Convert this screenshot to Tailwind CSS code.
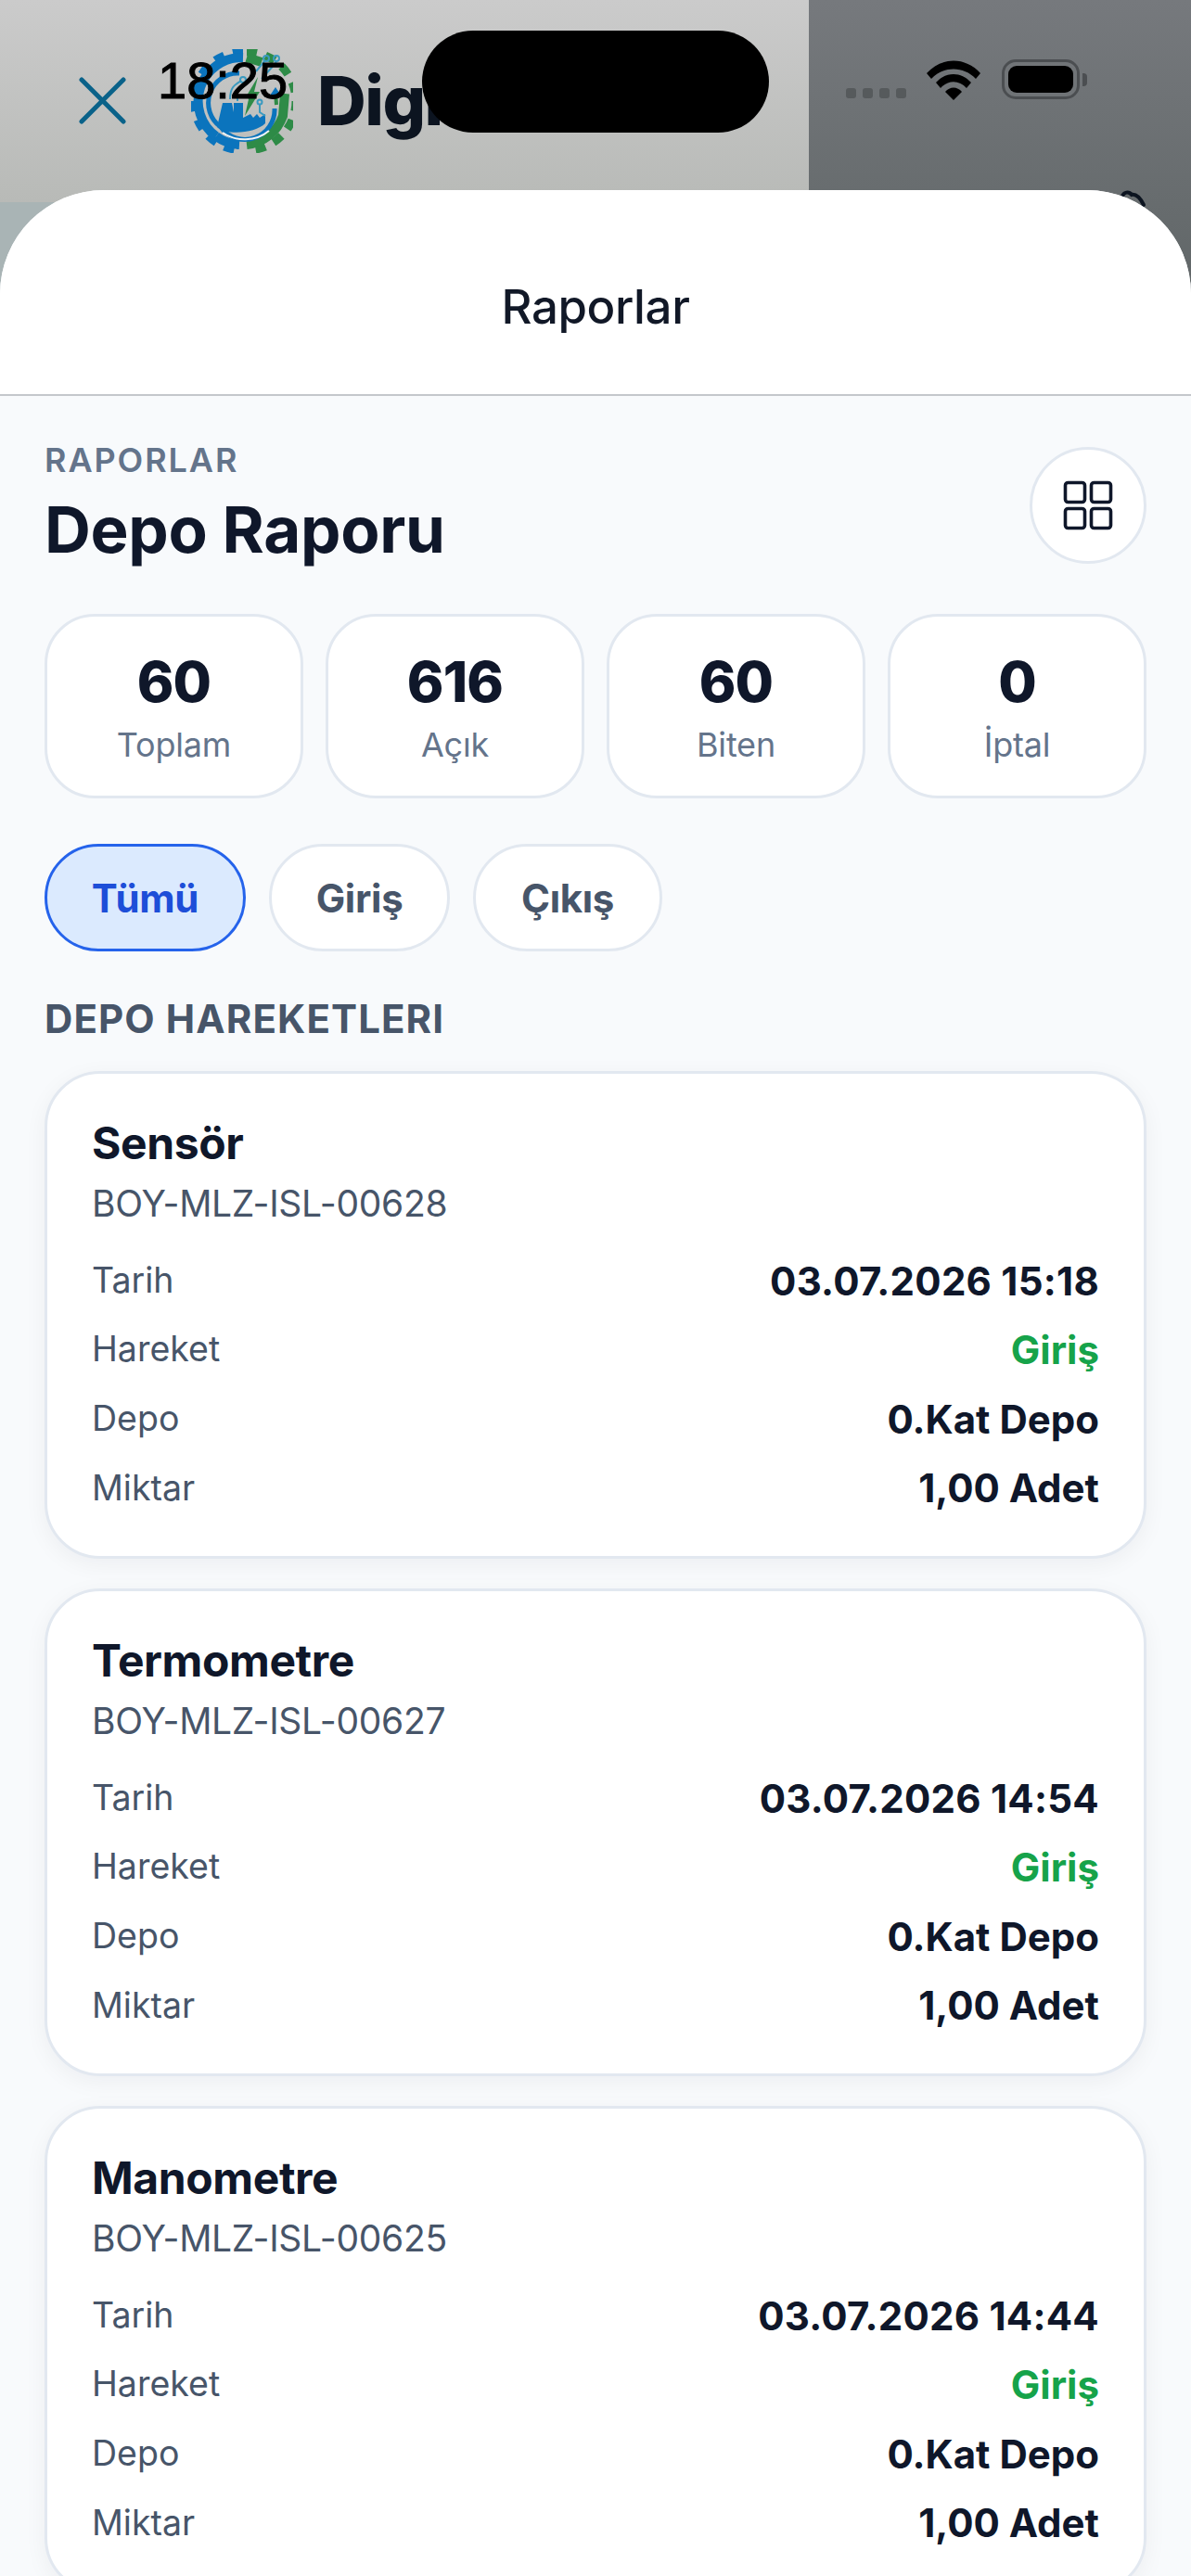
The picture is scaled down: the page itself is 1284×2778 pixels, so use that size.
<!DOCTYPE html>
<html lang="tr">
<head>
<meta charset="utf-8">
<title>Depo Raporu</title>
<script src="https://cdn.jsdelivr.net/npm/@tailwindcss/browser@4"></script>
</head>
<body class="m-0 bg-[#f8fafc]">
<div class="relative w-[1284px] h-[2778px] overflow-hidden font-['Inter',sans-serif] bg-[#f8fafc]">

  <!-- page behind the sheet -->
  <div class="absolute left-0 top-0 w-[1284px] h-[340px] flex">
    <div class="w-[872px] flex flex-col">
      <div class="h-[218px] bg-gradient-to-b from-[#cbcbcb] to-[#b8bab7]"></div>
      <div class="flex-1 bg-[#a9b4b5]"></div>
    </div>
    <div class="flex-1 bg-gradient-to-b from-[#76797d] to-[#5f6566]"></div>
  </div>
  <svg class="absolute left-[85px] top-[83px]" width="51" height="51" viewBox="0 0 51 51" fill="none"><path d="M3 3L48 48M48 3L3 48" stroke="#0a6289" stroke-width="5" stroke-linecap="round"/></svg>

  <!-- logo -->
  <svg class="absolute left-[206px] top-[53px]" width="110" height="112" viewBox="0 0 110 112" fill="none">
    <path d="M56 3A53 53 0 0 0 56 109" stroke="#0b74bd" stroke-width="9" stroke-dasharray="11 9.8"/>
    <path d="M56 9A47 47 0 0 0 27 94" stroke="#0b74bd" stroke-width="10"/>
    <path d="M27 94A47 47 0 0 0 52 103" stroke="#0b74bd" stroke-width="10"/>
    <path d="M60 3A53 53 0 0 1 60 109" stroke="#2e8b47" stroke-width="9" stroke-dasharray="11 9.8"/>
    <path d="M60 103A47 47 0 0 0 99 72L101 48" stroke="#2e8b47" stroke-width="10"/>
    <path d="M60 9L76 14" stroke="#2e8b47" stroke-width="10"/>
    <path d="M52 26A32 32 0 0 0 32 84A32 32 0 0 0 90 64" stroke="#0b74bd" stroke-width="5"/>
    <path d="M92 60L91 46" stroke="#2e8b47" stroke-width="4"/>
    <path d="M85 50L91 41L97 50Z" fill="#0b74bd"/>
    <path d="M28 84L34 58H44L46 68V58H56V74L64 70L67 74L71 70L74 74L80 70V80C70 90 40 94 28 84Z" fill="#0b74bd"/>
    <path d="M34 90C48 100 70 100 84 88" stroke="#f2f5f5" stroke-width="2"/>
    <path d="M60 50L72 30L68 46H74L58 72L62 54Z" fill="#2e8b47"/>
    <path d="M42 54C42 40 48 38 54 34M50 56V46L58 36M70 24L80 12M76 32L92 14" stroke="#3a9ac0" stroke-width="2"/>
    <circle cx="81" cy="10" r="3" stroke="#3a9ac0" stroke-width="2"/><circle cx="92" cy="10" r="3" stroke="#3a9ac0" stroke-width="2"/><circle cx="56" cy="33" r="3" stroke="#3a9ac0" stroke-width="2"/>
    <path d="M74 60V68L80 72" stroke="#3a9ac0" stroke-width="2"/>
    <circle cx="74" cy="57" r="2.5" stroke="#3a9ac0" stroke-width="2"/>
  </svg>
  <div class="absolute left-[342px] top-[65px] text-[73px] leading-[88px] font-extrabold text-[#0c1420] tracking-[-1.5px]">Digi</div>
  <svg class="absolute left-[1205px] top-[204px]" width="34" height="30" viewBox="0 0 34 30" fill="none"><path d="M5 8C6 3 12 2 15 6C20 5 25 11 28 17" stroke="#0c1420" stroke-width="4" stroke-linecap="round"/></svg>

  <!-- sheet -->
  <div class="relative mt-[205px] w-[1284px] h-[2573px] rounded-t-[112px] bg-[#f8fafc] overflow-hidden">
    <div class="h-[222px] bg-white border-b-[2px] border-[#c4c7cb] flex items-center justify-center pt-[32px] text-[51px] font-medium text-[#111827] tracking-[-0.4px]">Raporlar</div>

    <div class="px-[48px] pt-[48px]">
      <div class="flex items-center justify-between">
        <div>
          <div class="text-[36px] leading-[42px] font-semibold tracking-[1.9px] text-[#64748b]">RAPORLAR</div>
          <div class="mt-[11px] text-[69px] leading-[87px] font-bold tracking-[-0.3px] text-[#0f172a]">Depo Raporu</div>
        </div>
        <div class="w-[126px] h-[126px] rounded-full bg-white border-[3px] border-[#e2e8f0] flex items-center justify-center">
          <svg width="54" height="54" viewBox="0 0 54 54" fill="none" stroke="#0f172a" stroke-width="3.6"><rect x="2.5" y="2.5" width="21" height="21" rx="3"/><rect x="30.5" y="2.5" width="21" height="21" rx="3"/><rect x="2.5" y="30.5" width="21" height="21" rx="3"/><rect x="30.5" y="30.5" width="21" height="21" rx="3"/></svg>
        </div>
      </div>

      <div class="mt-[47px] grid grid-cols-4 gap-[24px]">
        <div class="h-[199px] rounded-[54px] bg-white border-[3px] border-[#e2e8f0] flex flex-col items-center pt-[37px]"><div class="text-[60px] leading-[66px] font-extrabold tracking-[-0.8px] text-[#0f172a]">60</div><div class="mt-[11px] text-[36px] leading-[48px] tracking-[-0.2px] text-[#64748b]">Toplam</div></div>
        <div class="h-[199px] rounded-[54px] bg-white border-[3px] border-[#e2e8f0] flex flex-col items-center pt-[37px]"><div class="text-[60px] leading-[66px] font-extrabold tracking-[-0.8px] text-[#0f172a]">616</div><div class="mt-[11px] text-[36px] leading-[48px] tracking-[-0.2px] text-[#64748b]">Açık</div></div>
        <div class="h-[199px] rounded-[54px] bg-white border-[3px] border-[#e2e8f0] flex flex-col items-center pt-[37px]"><div class="text-[60px] leading-[66px] font-extrabold tracking-[-0.8px] text-[#0f172a]">60</div><div class="mt-[11px] text-[36px] leading-[48px] tracking-[-0.2px] text-[#64748b]">Biten</div></div>
        <div class="h-[199px] rounded-[54px] bg-white border-[3px] border-[#e2e8f0] flex flex-col items-center pt-[37px]"><div class="text-[60px] leading-[66px] font-extrabold tracking-[-0.8px] text-[#0f172a]">0</div><div class="mt-[11px] text-[36px] leading-[48px] tracking-[-0.2px] text-[#64748b]">İptal</div></div>
      </div>

      <div class="mt-[49px] flex gap-[25px]">
        <div class="h-[116px] w-[217px] rounded-full bg-[#dbeafe] border-[3px] border-[#2563eb] flex items-center justify-center text-[42px] font-bold tracking-[-0.3px] text-[#1d4ed8]">Tümü</div>
        <div class="h-[116px] w-[195px] rounded-full bg-white border-[3px] border-[#e2e8f0] flex items-center justify-center text-[42px] font-bold tracking-[-0.3px] text-[#475569]">Giriş</div>
        <div class="h-[116px] w-[204px] rounded-full bg-white border-[3px] border-[#e2e8f0] flex items-center justify-center text-[42px] font-bold tracking-[-0.3px] text-[#475569]">Çıkış</div>
      </div>

      <div class="mt-[49px] text-[42px] leading-[48px] font-bold tracking-[1.1px] text-[#475569]">DEPO HAREKETLERI</div>

      <div class="mt-[32px] flex flex-col gap-[32px]">
        <div class="h-[526px] shrink-0 rounded-[60px] bg-white border-[3px] border-[#e2e8f0] shadow-[0_6px_24px_rgba(15,23,42,0.05)] px-[48px] pt-[45px]">
          <div class="text-[48px] leading-[60px] font-bold tracking-[-0.4px] text-[#0f172a]">Sensör</div>
          <div class="mt-[11px] text-[39px] leading-[48px] tracking-[-0.3px] text-[#475569]">BOY-MLZ-ISL-00628</div>
          <div class="mt-[34px] flex flex-col gap-[24.6px]">
            <div class="flex justify-between h-[50px] items-center"><span class="text-[37.5px] text-[#475569]">Tarih</span><span class="text-[42px] font-bold tracking-[0.25px] text-[#0f172a]">03.07.2026 15:18</span></div>
            <div class="flex justify-between h-[50px] items-center"><span class="text-[37.5px] text-[#475569]">Hareket</span><span class="text-[42px] font-bold text-[#16a34a]">Giriş</span></div>
            <div class="flex justify-between h-[50px] items-center"><span class="text-[37.5px] text-[#475569]">Depo</span><span class="text-[42px] font-bold text-[#0f172a]">0.Kat Depo</span></div>
            <div class="flex justify-between h-[50px] items-center"><span class="text-[37.5px] text-[#475569]">Miktar</span><span class="text-[42px] font-bold text-[#0f172a]">1,00 Adet</span></div>
          </div>
        </div>
        <div class="h-[526px] shrink-0 rounded-[60px] bg-white border-[3px] border-[#e2e8f0] shadow-[0_6px_24px_rgba(15,23,42,0.05)] px-[48px] pt-[45px]">
          <div class="text-[48px] leading-[60px] font-bold tracking-[-0.4px] text-[#0f172a]">Termometre</div>
          <div class="mt-[11px] text-[39px] leading-[48px] tracking-[-0.3px] text-[#475569]">BOY-MLZ-ISL-00627</div>
          <div class="mt-[34px] flex flex-col gap-[24.6px]">
            <div class="flex justify-between h-[50px] items-center"><span class="text-[37.5px] text-[#475569]">Tarih</span><span class="text-[42px] font-bold tracking-[0.25px] text-[#0f172a]">03.07.2026 14:54</span></div>
            <div class="flex justify-between h-[50px] items-center"><span class="text-[37.5px] text-[#475569]">Hareket</span><span class="text-[42px] font-bold text-[#16a34a]">Giriş</span></div>
            <div class="flex justify-between h-[50px] items-center"><span class="text-[37.5px] text-[#475569]">Depo</span><span class="text-[42px] font-bold text-[#0f172a]">0.Kat Depo</span></div>
            <div class="flex justify-between h-[50px] items-center"><span class="text-[37.5px] text-[#475569]">Miktar</span><span class="text-[42px] font-bold text-[#0f172a]">1,00 Adet</span></div>
          </div>
        </div>
        <div class="h-[526px] shrink-0 rounded-[60px] bg-white border-[3px] border-[#e2e8f0] shadow-[0_6px_24px_rgba(15,23,42,0.05)] px-[48px] pt-[45px]">
          <div class="text-[48px] leading-[60px] font-bold tracking-[-0.4px] text-[#0f172a]">Manometre</div>
          <div class="mt-[11px] text-[39px] leading-[48px] tracking-[-0.3px] text-[#475569]">BOY-MLZ-ISL-00625</div>
          <div class="mt-[34px] flex flex-col gap-[24.6px]">
            <div class="flex justify-between h-[50px] items-center"><span class="text-[37.5px] text-[#475569]">Tarih</span><span class="text-[42px] font-bold tracking-[0.25px] text-[#0f172a]">03.07.2026 14:44</span></div>
            <div class="flex justify-between h-[50px] items-center"><span class="text-[37.5px] text-[#475569]">Hareket</span><span class="text-[42px] font-bold text-[#16a34a]">Giriş</span></div>
            <div class="flex justify-between h-[50px] items-center"><span class="text-[37.5px] text-[#475569]">Depo</span><span class="text-[42px] font-bold text-[#0f172a]">0.Kat Depo</span></div>
            <div class="flex justify-between h-[50px] items-center"><span class="text-[37.5px] text-[#475569]">Miktar</span><span class="text-[42px] font-bold text-[#0f172a]">1,00 Adet</span></div>
          </div>
        </div>
      </div>
    </div>
  </div>

  <!-- status bar -->
  <div class="absolute left-[455px] top-[33px] w-[374px] h-[110px] rounded-full bg-black"></div>
  <div class="absolute left-[170px] top-[55px] text-[56px] leading-[64px] font-['Liberation_Sans',sans-serif] [-webkit-text-stroke:1px_black] text-black">18:25</div>
  <div class="absolute left-[912px] top-[95px] flex gap-[7px]">
    <div class="w-[11px] h-[11px] rounded-[3px] bg-[#565a5c]"></div>
    <div class="w-[11px] h-[11px] rounded-[3px] bg-[#565a5c]"></div>
    <div class="w-[11px] h-[11px] rounded-[3px] bg-[#565a5c]"></div>
    <div class="w-[11px] h-[11px] rounded-[3px] bg-[#565a5c]"></div>
  </div>
  <svg class="absolute left-[999px] top-[64px]" width="58" height="44" viewBox="0 0 58 44" fill="black">
    <path d="M0 15C16 -3 42 -3 58 15L53 21C40 7 18 7 5 21Z"/>
    <path d="M10 25C21 13 37 13 48 25L43 31C35 22 23 22 15 31Z"/>
    <path d="M20 35C25 29 33 29 38 35L29 44Z"/>
  </svg>
  <div class="absolute left-[1080px] top-[64px] w-[84px] h-[43px] rounded-[15px] border-[3px] border-[#4b4e51] flex items-center justify-center">
    <div class="w-[70px] h-[29px] rounded-[9px] bg-black"></div>
  </div>
  <div class="absolute left-[1167px] top-[79px] w-[5px] h-[14px] rounded-r-[4px] bg-[#4b4e51]"></div>
</div>
</body>
</html>
